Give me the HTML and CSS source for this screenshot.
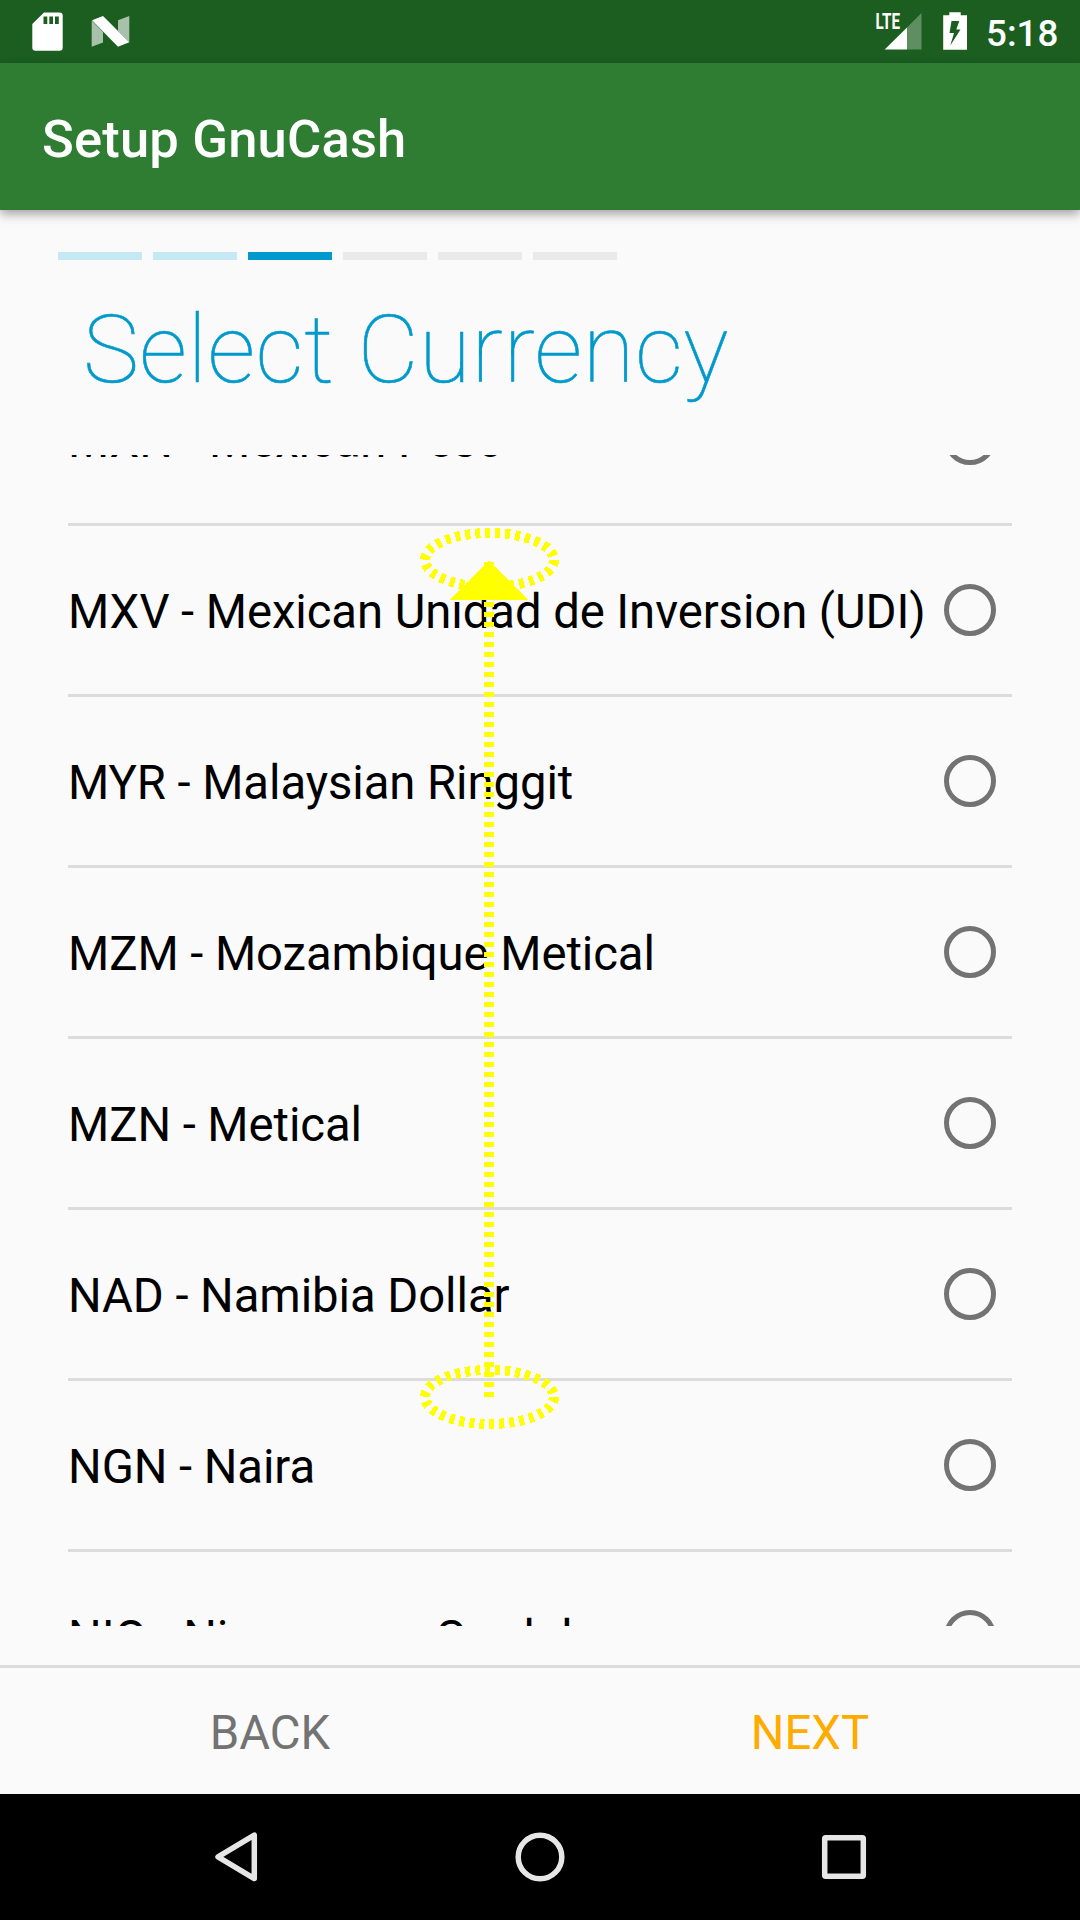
FILE: index.html
```html
<!DOCTYPE html>
<html lang="en">
<head>
<meta charset="utf-8">
<title>Setup GnuCash</title>
<link rel="stylesheet" href="styles.css">
</head>
<body>
<div class="screen">
  <header class="status-bar">
    <svg class="status-icons" width="140" height="63" viewBox="0 0 140 63">
      <path fill="#fff" fill-rule="evenodd" d="M44 12.4H59.500a3.200 3.200 0 0 1 3.200 3.200V47.600a3.200 3.200 0 0 1-3.200 3.200H35.500a3.200 3.200 0 0 1-3.200-3.200V24.100ZM43.500 16.400V24H47.300V16.400ZM49.300 16.400V24H53V16.400ZM55 16.400V24H58.800V16.400Z"/>
      <path fill="#fff" fill-opacity=".62" d="M91.700 20.500 103 32V42.500L91.700 46.800ZM118 20.300 129.300 16V42L118 31Z"/>
      <path fill="#fff" d="M92 20.300 103 16 129.300 42.300 118 46.800Z"/>
    </svg>
    <div class="status-right">
      <svg width="100" height="63" viewBox="876 0 100 63">
        <path fill="#fff" fill-opacity=".3" d="M921.500 13V49.500H907V27.500Z"/>
        <path fill="#fff" d="M907 27.500V49.500H884.700Z"/>
        <text class="lte" x="875.500" y="29" textLength="24.500" lengthAdjust="spacingAndGlyphs">LTE</text>
        <path fill="#fff" fill-rule="evenodd" d="M949.300 12.300H960.700V15.300H967V49.800H943.200V15.300H949.300ZM951.500 21 949.500 33H954L950.300 45.500 960.500 29.500H956.300L959.300 21Z"/>
      </svg>
      <span class="clock">5:18</span>
    </div>
  </header>
  <div class="app-bar"><h1 class="app-title">Setup GnuCash</h1></div>
  <main class="wizard">
    <div class="steps">
      <i class="step done"></i><i class="step done"></i><i class="step current"></i><i class="step"></i><i class="step"></i><i class="step"></i>
    </div>
    <h2 class="page-title">Select Currency</h2>
    <div class="list-window">
      <ul class="list">
        <li class="row"><span>MXN - Mexican Peso</span><i class="radio"></i></li>
        <li class="row"><span>MXV - Mexican Unidad de Inversion (UDI)</span><i class="radio"></i></li>
        <li class="row"><span>MYR - Malaysian Ringgit</span><i class="radio"></i></li>
        <li class="row"><span>MZM - Mozambique Metical</span><i class="radio"></i></li>
        <li class="row"><span>MZN - Metical</span><i class="radio"></i></li>
        <li class="row"><span>NAD - Namibia Dollar</span><i class="radio"></i></li>
        <li class="row"><span>NGN - Naira</span><i class="radio"></i></li>
        <li class="row"><span>NIO - Nicaraguan Cordoba</span><i class="radio"></i></li>
      </ul>
    </div>
  </main>
  <footer class="actions">
    <div class="action back">BACK</div>
    <div class="action next">NEXT</div>
  </footer>
  <nav class="nav-bar">
    <svg width="1080" height="126" viewBox="0 0 1080 126" fill="none" stroke="#e6e6e6" stroke-width="5.500" stroke-linejoin="round">
      <path d="M254.300 41.200V84.600L218 62.900Z"/>
      <circle cx="540" cy="63" r="21.800"/>
      <rect x="824.700" y="43.700" width="38.600" height="38.600" rx="1"/>
    </svg>
  </nav>
  <svg class="gesture" width="160" height="920" viewBox="410 520 160 920" shape-rendering="crispEdges">
    <g fill="none" stroke="#ff0" stroke-width="10" stroke-dasharray="5 5">
      <path d="M554 560A64.500 27 0 0 1 425 560A64.500 27 0 0 1 554 560"/>
      <path d="M554 1397A64.500 27 0 0 1 425 1397A64.500 27 0 0 1 554 1397"/>
      <path d="M489 1397V562"/>
    </g>
    <path fill="#ff0" d="M489 560.500 528 600H450Z"/>
  </svg>
</div>
</body>
</html>
```
FILE: styles.css
```css
* { box-sizing: border-box; }
body { margin: 0; font-family: Roboto, sans-serif; background: #fafafa; }
.screen {
  position: relative;
  width: 1080px;
  height: 1920px;
  display: flex;
  flex-direction: column;
  overflow: hidden;
}
.status-bar {
  height: 63px;
  flex: none;
  display: flex;
  justify-content: space-between;
  background: #1b5e20;
  color: #fff;
}
.status-right { display: flex; width: 204px; }
.status-right svg { flex: none; overflow: visible; }
.lte { font: 700 22px Roboto, sans-serif; fill: #fff; }
.clock { font-size: 36.75px; font-weight: 500; line-height: 68px; padding-left: 10px; }
.app-bar {
  height: 147px;
  flex: none;
  display: flex;
  align-items: center;
  padding: 5px 42px 0;
  background: #2e7d32;
  color: #fff;
  box-shadow: 0 4px 10px rgba(0, 0, 0, .36);
}
.app-title { margin: 0; font-size: 52.5px; font-weight: 500; letter-spacing: .18px; }
.wizard { height: 1455px; flex: none; padding-top: 42px; }
.steps { display: flex; gap: 11px; padding-left: 58px; }
.step { width: 84px; height: 8px; background: #eaeaea; }
.step.done { background: #c5e8f5; }
.step.current { background: #09c; }
.page-title {
  margin: 0;
  height: 195px;
  padding: 34px 0 0 83px;
  font-size: 94.5px;
  line-height: 111px;
  font-weight: 100;
  letter-spacing: .48px;
  -webkit-text-stroke: .6px #09c;
  color: #09c;
}
.list-window {
  height: 1171px;
  margin: 0 68px;
  overflow: hidden;
}
.list { list-style: none; margin: -100px 0 0; padding: 0; }
.row {
  height: 171px;
  display: flex;
  align-items: center;
  justify-content: space-between;
  padding-right: 16px;
  border-bottom: 3px solid #dcdcdc;
  font-size: 47.25px;
  letter-spacing: -.07px;
  white-space: nowrap;
}
.row span { padding-top: 3px; }
.radio {
  width: 52px;
  height: 52px;
  flex: none;
  border: 5px solid #737373;
  border-radius: 50%;
}
.actions {
  height: 129px;
  flex: none;
  display: flex;
  border-top: 3px solid #dcdcdc;
  font-size: 47.25px;
}
.action { flex: 1; text-align: center; line-height: 130px; }
.back { color: #737373; }
.next { color: #ffab00; }
.nav-bar { height: 126px; flex: none; background: #000; }
.nav-bar svg { display: block; }
.gesture { position: absolute; left: 410px; top: 520px; }
```
